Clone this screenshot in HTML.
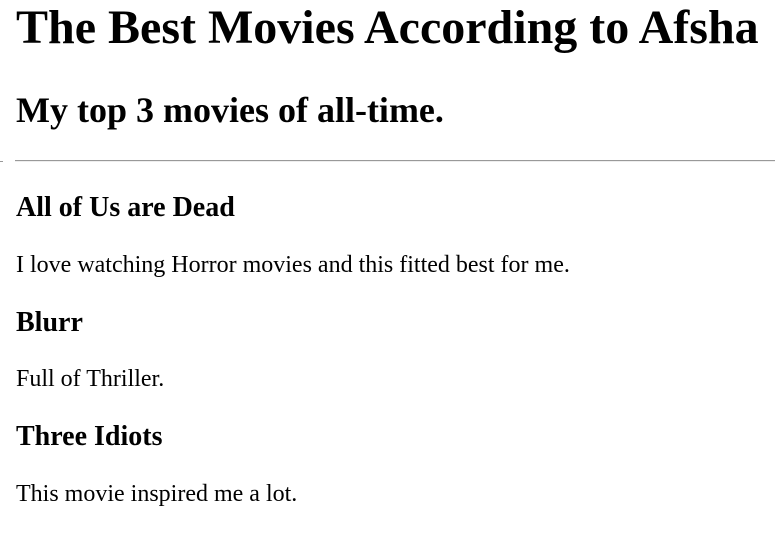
<!DOCTYPE html>
<html><head><meta charset="utf-8"><style>
html,body{margin:0;padding:0;background:#fff;width:775px;height:544px;overflow:hidden;position:relative}
div{position:absolute;left:16px;line-height:1;font-family:"Liberation Serif","Times New Roman",serif;color:#000;white-space:nowrap}
.h1{font-size:48px;font-weight:bold;top:4px}
.h2{font-size:36px;font-weight:bold;top:92px}
.h3{font-size:28px;font-weight:bold}
.p{font-size:24px}
.hr{left:15px;top:160px;width:760px;height:0;border-top:1px solid #999;border-bottom:1px solid #eee}
.dash{left:0;top:161px;width:3px;height:1px;background:#999}
</style></head><body>
<div class="h1">The Best Movies According to Afsha</div>
<div class="h2">My top 3 movies of all-time.</div>
<div class="hr"></div>
<div class="dash"></div>
<div class="h3" style="top:194px">All of Us are Dead</div>
<div class="p" style="top:253px">I love watching Horror movies and this fitted best for me.</div>
<div class="h3" style="top:309px">Blurr</div>
<div class="p" style="top:367px">Full of Thriller.</div>
<div class="h3" style="top:423px">Three Idiots</div>
<div class="p" style="top:482px">This movie inspired me a lot.</div>
</body></html>
